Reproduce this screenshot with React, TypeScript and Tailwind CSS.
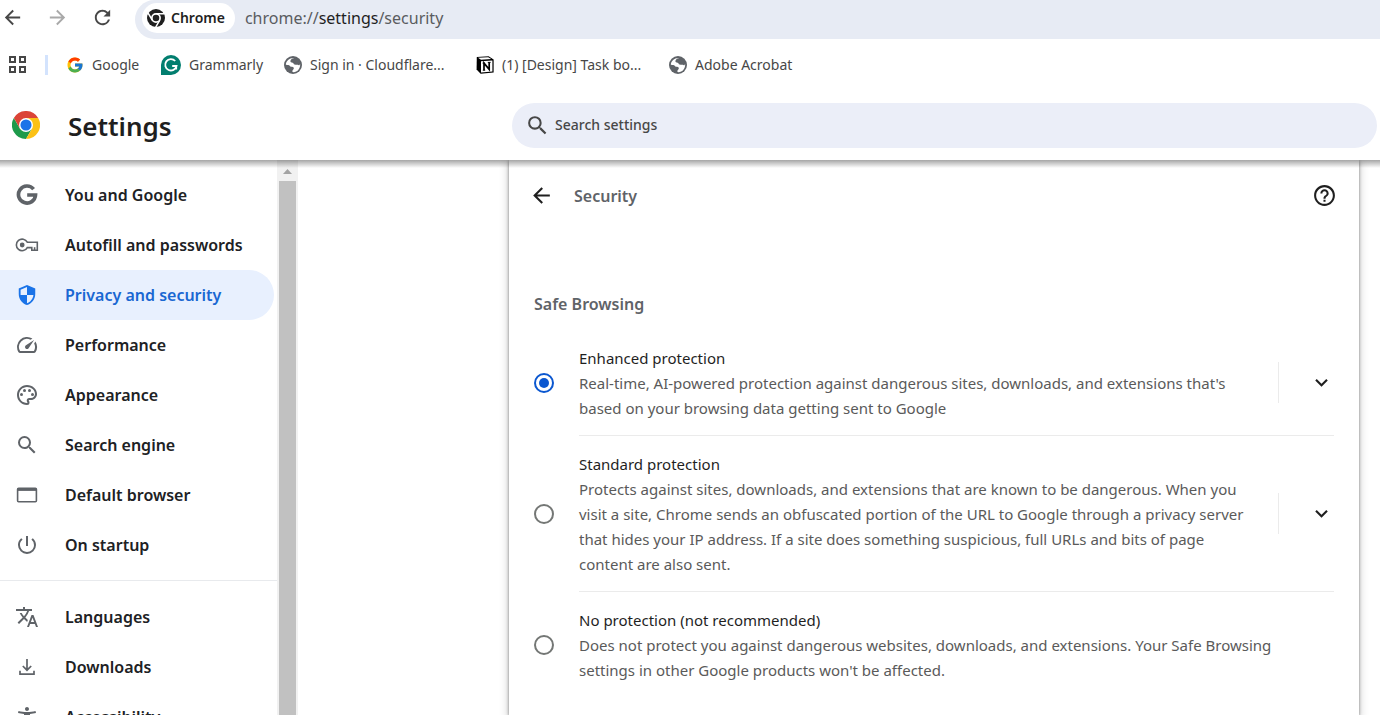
import { useState } from "react"
import type { ReactNode } from "react"
import { FcGoogle } from "react-icons/fc"
import {
  MdAccessibilityNew,
  MdArrowBack,
  MdArrowForward,
  MdExpandMore,
  MdHelpOutline,
  MdOutlinePalette,
  MdOutlineSpeed,
  MdPowerSettingsNew,
  MdRefresh,
  MdSearch,
  MdSecurity,
  MdTranslate,
} from "react-icons/md"

function GoogleG() {
  return (
    <svg viewBox="0 0 24 24" className="size-[22px]" fill="none" stroke="currentColor" strokeWidth="4">
      <path d="M19.2 5.6A9.3 9.3 0 1 0 21.3 12H12.2" />
    </svg>
  )
}

function KeyIcon() {
  return (
    <svg viewBox="0 0 24 16" className="h-4 w-6" fill="none" stroke="currentColor" strokeWidth="1.6">
      <path d="M12.3 5.2A5.8 5.8 0 1 0 12.3 10.6H16.8V13.2H22.3V5.2Z" />
      <circle cx="7.2" cy="8" r="2.4" fill="currentColor" stroke="none" />
      <path d="M19.6 13V10.2" />
    </svg>
  )
}

function WindowIcon() {
  return (
    <svg viewBox="0 0 22 16" className="h-4 w-[22px]" fill="none" stroke="currentColor" strokeWidth="1.6">
      <rect x="1.6" y="1.2" width="18.8" height="13.6" rx="1" />
      <path d="M1.6 2.6H20.4" strokeWidth="2.6" />
    </svg>
  )
}

function DownloadIcon() {
  return (
    <svg viewBox="0 0 18 18" className="size-[18px]" fill="none" stroke="currentColor" strokeWidth="1.7">
      <path d="M9 1V12M4.8 8L9 12.2L13.2 8M2 12.8V16.2H16V12.8" />
    </svg>
  )
}

function ChromeLogo() {
  return (
    <svg viewBox="0 0 48 48" className="size-7">
      <path fill="#1e9a4b" d="M13.6 30L3.2 12A24 24 0 0 0 24 48L34.4 30Z" />
      <path fill="#db4437" d="M24 12H44.8A24 24 0 0 0 3.2 12L13.6 30Z" />
      <path fill="#fbc116" d="M24 12H44.8A24 24 0 0 1 24 48L34.4 30Z" />
      <circle cx="24" cy="24" r="12" fill="#fff" />
      <circle cx="24" cy="24" r="9.5" fill="#1a73e8" />
    </svg>
  )
}

function ChromeMono() {
  return (
    <svg viewBox="0 0 48 48" className="size-[18px]">
      <circle cx="24" cy="24" r="24" fill="#1f1f1f" />
      <path d="M24 12.5H46M14 29.7L3 10.7M34 29.7L23 48.8" stroke="#fff" strokeWidth="4" />
      <circle cx="24" cy="24" r="11" fill="#1f1f1f" stroke="#fff" strokeWidth="4.5" />
    </svg>
  )
}

function GrammarlyLogo() {
  return (
    <svg viewBox="0 0 20 20" className="size-5">
      <path fill="#027e6f" d="M10 0A10 10 0 0 1 10 20H0V10A10 10 0 0 1 10 0Z" />
      <path d="M14.2 6A5.7 5.7 0 1 0 15.5 11H11.2M15.2 10.6V14.4" fill="none" stroke="#fff" strokeWidth="1.8" />
    </svg>
  )
}

function NotionLogo() {
  return (
    <svg viewBox="0 0 18 18" className="size-[18px]">
      <path d="M0.8 1L12.6 0.2L17.6 3.4V16.6L4.6 17.8L0.6 13.4Z" fill="#000" />
      <path d="M2 1.8L12.2 1.2L15.2 3L5 3.8Z" fill="#fff" />
      <path d="M5 5.2L16.4 4.4V15.6L5 16.4Z" fill="#fff" />
      <path d="M8 14.2V7.2L13.2 13.4V6.4" fill="none" stroke="#000" strokeWidth="1.7" />
      <path d="M6.6 7.1H8.8M6.8 14.2H9.2M11.8 6.4H14.6" stroke="#000" />
    </svg>
  )
}

function GlobeIcon() {
  return (
    <svg viewBox="0 0 18 18" className="size-[18px]">
      <circle cx="9" cy="9" r="9" fill="#5f6368" />
      <path
        fill="#fff"
        d="M10.2 2C8.2 2.6 6.6 3.4 6.4 5C6.3 6.4 7.4 6.6 8.6 6.7C9.6 6.8 9.4 8.2 10.6 8.5C12.2 8.9 13.6 8.4 14.8 9.2C15.8 9.9 15.6 7.6 16.2 8.4C16.2 12.8 13.2 16 9.6 16.2C8.4 16.2 8.2 15.6 8.4 14.8C8.6 13.8 10 13.4 9.8 12.2C9.6 10.8 8.4 11 7.2 10.8C5.8 10.5 5.6 9.2 4.2 9C3.2 8.9 2.4 9.4 1.8 8.6C2.2 4.8 5.4 1.6 10.2 2Z"
      />
      <path fill="#5f6368" d="M10.6 2.4C12 2.8 12.6 3.8 11.8 4.8C11 5.7 9.8 4.8 9.4 5.8C9.2 6.6 10.4 6.8 11.4 7C13.4 7.2 14.6 6.6 15.8 7.4C15.2 4.6 13.2 2.6 10.6 2.4Z" />
    </svg>
  )
}

const bookmarks: { label: string; icon: ReactNode; className: string }[] = [
  { label: "Google", icon: <FcGoogle size={18} />, className: "w-[95px]" },
  { label: "Grammarly", icon: <GrammarlyLogo />, className: "w-[123px]" },
  { label: "Sign in · Cloudflare...", icon: <GlobeIcon />, className: "w-[192px]" },
  { label: "(1) [Design] Task bo...", icon: <NotionLogo />, className: "w-[193px]" },
  { label: "Adobe Acrobat", icon: <GlobeIcon />, className: "" },
]

const mainItems: { label: string; icon: ReactNode }[] = [
  { label: "You and Google", icon: <GoogleG /> },
  { label: "Autofill and passwords", icon: <KeyIcon /> },
  { label: "Privacy and security", icon: <MdSecurity size={22} /> },
  { label: "Performance", icon: <MdOutlineSpeed size={24} /> },
  { label: "Appearance", icon: <MdOutlinePalette size={24} /> },
  { label: "Search engine", icon: <MdSearch size={24} /> },
  { label: "Default browser", icon: <WindowIcon /> },
  { label: "On startup", icon: <MdPowerSettingsNew size={24} /> },
]

const moreItems: { label: string; icon: ReactNode }[] = [
  { label: "Languages", icon: <MdTranslate size={24} /> },
  { label: "Downloads", icon: <DownloadIcon /> },
  { label: "Accessibility", icon: <MdAccessibilityNew size={24} /> },
]

const options = [
  {
    id: "enhanced",
    title: "Enhanced protection",
    text: "Real-time, AI-powered protection against dangerous sites, downloads, and extensions that's based on your browsing data getting sent to Google",
    expandable: true,
  },
  {
    id: "standard",
    title: "Standard protection",
    text: "Protects against sites, downloads, and extensions that are known to be dangerous. When you visit a site, Chrome sends an obfuscated portion of the URL to Google through a privacy server that hides your IP address. If a site does something suspicious, full URLs and bits of page content are also sent.",
    expandable: true,
  },
  {
    id: "none",
    title: "No protection (not recommended)",
    text: "Does not protect you against dangerous websites, downloads, and extensions. Your Safe Browsing settings in other Google products won't be affected.",
    expandable: false,
  },
]

function NavItem({ label, icon }: { label: string; icon: ReactNode }) {
  const active = label === "Privacy and security"
  return (
    <li>
      <a
        href="#"
        aria-current={active ? "page" : undefined}
        className={`mr-[3px] flex h-[50px] items-center rounded-r-full text-base font-semibold ${active ? "bg-[#e8f0fe] text-[#1967d2]" : "text-[#202124]"}`}
      >
        <span className={`flex w-[54px] justify-center ${active ? "text-[#1a73e8]" : "text-[#5f6368]"}`}>{icon}</span>
        <span className="pl-[11px]">{label}</span>
      </a>
    </li>
  )
}

export default function App() {
  const [level, setLevel] = useState("enhanced")

  return (
    <div className="flex h-screen flex-col overflow-hidden bg-white font-['Noto_Sans',sans-serif] text-[#1f1f1f]">
      {/* Toolbar */}
      <div className="flex h-[39px] shrink-0">
        <div className="flex w-[135px] items-center justify-between pr-[21px] pb-1 pl-px text-[#474747]">
          <button aria-label="Back"><MdArrowBack size={23} /></button>
          <button aria-label="Forward" className="text-[#a9a9a9]"><MdArrowForward size={23} /></button>
          <button aria-label="Reload"><MdRefresh size={23} /></button>
        </div>
        <div className="flex flex-1 items-center rounded-l-full bg-[#e7ebf4] pb-[3px] pl-[7px]">
          <button className="flex h-[30px] items-center gap-1.5 rounded-full bg-white pr-2.5 pl-[5px] text-sm font-semibold">
            <ChromeMono />
            Chrome
          </button>
          <div role="textbox" aria-label="Address" className="ml-2.5 text-base text-[#5a5c60]">
            chrome://<span className="text-[#1f1f1f]">settings</span>/security
          </div>
        </div>
      </div>

      {/* Bookmarks */}
      <div className="flex h-[51px] shrink-0 items-center text-sm text-[#474747]">
        <button aria-label="Apps" className="ml-2">
          <svg viewBox="0 0 20 20" className="size-5" fill="none" stroke="#474747" strokeWidth="2">
            <path d="M2 2H7V7H2ZM12 2H17V7H12ZM2 12H7V17H2ZM12 12H17V17H12Z" />
          </svg>
        </button>
        <span className="mr-[18px] ml-[17px] h-5 w-[3px] bg-[#d3e3fd]" />
        {bookmarks.map((b) => (
          <a key={b.label} href="#" className={`flex shrink-0 items-center gap-2 whitespace-nowrap ${b.className}`}>
            <span className="shrink-0">{b.icon}</span>
            {b.label}
          </a>
        ))}
      </div>

      {/* Settings header */}
      <header className="flex h-[70px] shrink-0 items-center pr-[3px]">
        <div className="flex w-[512px] shrink-0 items-center gap-7 pl-3">
          <ChromeLogo />
          <h1 className="pt-[3px] text-[26px] font-semibold">Settings</h1>
        </div>
        <label className="flex h-[45px] flex-1 items-center gap-[5px] rounded-full bg-[#ebeef8] pl-[13px] text-[#474747]">
          <MdSearch size={25} />
          <input
            type="search"
            aria-label="Search settings"
            placeholder="Search settings"
            className="flex-1 bg-transparent text-sm font-medium outline-none placeholder:text-[#474747]"
          />
        </label>
      </header>

      <div className="relative flex min-h-0 flex-1">
        <div className="pointer-events-none absolute inset-x-0 top-0 z-10 h-2 bg-linear-to-b from-black/35 to-transparent" />

        <nav className="w-[277px] shrink-0 overflow-hidden pt-2.5">
          <ul>
            {mainItems.map((item) => <NavItem key={item.label} {...item} />)}
          </ul>
          <hr className="mt-2.5 mb-[11px] border-[#e8eaed]" />
          <ul>
            {moreItems.map((item) => <NavItem key={item.label} {...item} />)}
          </ul>
        </nav>

        <div className="flex w-[21px] shrink-0 flex-col items-center bg-[#f1f1f1]">
          <svg viewBox="0 0 21 21" className="size-[21px] shrink-0">
            <path d="M6 14L10.5 9L15 14Z" fill="#a3a3a3" />
          </svg>
          <div className="w-[17px] flex-1 bg-[#c1c1c1]" />
        </div>

        <main className="flex min-w-0 flex-1 justify-end overflow-hidden pr-[21px]">
          <section className="w-full max-w-[850px] px-[25px] shadow-[0_1px_3px_rgba(0,0,0,0.45),0_2px_8px_2px_rgba(0,0,0,0.15)]">
            <div className="-mr-[3px] flex h-[71px] items-center">
              <button aria-label="Back to Privacy and security" className="-ml-[5px]"><MdArrowBack size={25} /></button>
              <h2 className="ml-5 flex-1 text-base font-semibold text-[#5f6368]">Security</h2>
              <button aria-label="Help"><MdHelpOutline size={25} /></button>
            </div>

            <h3 className="mt-[61px] text-base leading-[25px] font-semibold text-[#5f6368]">Safe Browsing</h3>

            <div role="radiogroup" aria-label="Safe Browsing" className="mt-[13px]">
              {options.map((o) => (
                <div key={o.id} className="flex items-center">
                  <input
                    type="radio"
                    id={o.id}
                    name="safe-browsing"
                    checked={level === o.id}
                    onChange={() => setLevel(o.id)}
                    className="mr-[25px] size-5 shrink-0 appearance-none rounded-full border-2 border-[#747775] bg-clip-content p-[3px] checked:border-[#0b57d0] checked:bg-[#0b57d0]"
                  />
                  <div className={`flex flex-1 items-center ${o.id === "none" ? "pr-12" : "border-b border-[#ebebeb]"}`}>
                    <label htmlFor={o.id} className="flex-1 pt-4 pb-[14px] text-[15px] leading-[25px]">
                      {o.title}
                      <span className="block text-[#5a5a5a]">{o.text}</span>
                    </label>
                    {o.expandable && (
                      <div className="ml-5 flex h-[41px] w-14 items-center justify-end border-l border-[#ebebeb]">
                        <button aria-label={`More about ${o.title}`}><MdExpandMore size={25} /></button>
                      </div>
                    )}
                  </div>
                </div>
              ))}
            </div>
          </section>
        </main>
      </div>
    </div>
  )
}
